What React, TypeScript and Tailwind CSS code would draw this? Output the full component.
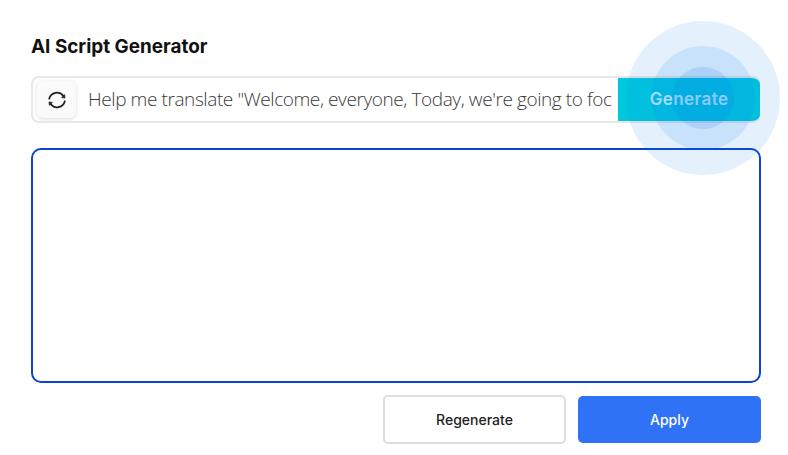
function RefreshIcon() {
  return (
    <svg width="20" height="20" viewBox="0 0 20 20" fill="none" stroke="#1f1f1f" strokeWidth="1.7" strokeLinecap="round" strokeLinejoin="round">
      <path d="M2.2 8.8A8 8 0 0 1 16.4 6" />
      <path d="M17.8 11.2A8 8 0 0 1 3.6 14" />
      <path d="M15 7.6 18 8 17.6 5Z" fill="#1f1f1f" strokeWidth="0.8" />
      <path d="M5 12.4 2 12 2.4 15Z" fill="#1f1f1f" strokeWidth="0.8" />
    </svg>
  );
}

export default function App() {
  return (
    <div className="relative h-[455px] w-[788px] overflow-hidden bg-white pl-[31px] pr-[27px] pt-[36px] font-['Inter',sans-serif]">
      <h1 className="h-[22px] text-[18.9px] font-bold leading-[22px] text-[#111]">AI Script Generator</h1>

      <div className="mt-[18px] flex h-[47px] w-[729px] items-stretch overflow-hidden rounded-[8px] border-2 border-r-0 border-[#e8e8e8] bg-white">
        <div className="ml-[4px] mt-[3px] flex h-[37px] w-[39px] shrink-0 items-center justify-center rounded-[6px] bg-[#fafafa] shadow-[0_1px_4px_rgba(0,0,0,0.14)]">
          <RefreshIcon />
        </div>
        <div className="ml-[12px] flex-1 overflow-hidden whitespace-nowrap font-['Open_Sans',sans-serif] text-[19px] font-light leading-[42px] tracking-[-0.41px] text-[#3a3a3a]">
          Help me translate "Welcome, everyone, Today, we're going to foc
        </div>
        <button className="-my-[2px] flex w-[142px] shrink-0 items-center justify-center rounded-r-[4px] bg-[#00c8dc] font-['Inter',sans-serif] text-[17px] font-semibold tracking-[0.4px] text-[#d0f4ff]">
          Generate
        </button>
      </div>

      <div className="mt-[25px] h-[235px] w-[730px] rounded-[10px] border-2 border-[#0a45d0] bg-white" />

      <div className="mt-[12px] flex w-[730px] justify-end gap-[12px]">
        <button className="h-[49px] w-[183px] rounded-[5px] border-2 border-[#dedede] bg-white text-[14px] font-medium text-[#222]">
          Regenerate
        </button>
        <button className="mt-[1px] h-[47px] w-[183px] rounded-[5px] bg-[#3072f6] text-[14px] font-medium text-white">
          Apply
        </button>
      </div>

      <div className="pointer-events-none absolute left-[626px] top-[21px] flex h-[154px] w-[154px] items-center justify-center rounded-full bg-[#0a7cf0]/11">
        <div className="flex h-[104px] w-[104px] items-center justify-center rounded-full bg-[#0a7cf0]/12">
          <div className="h-[62px] w-[62px] rounded-full bg-[#0a7cf0]/15" />
        </div>
      </div>
    </div>
  );
}
